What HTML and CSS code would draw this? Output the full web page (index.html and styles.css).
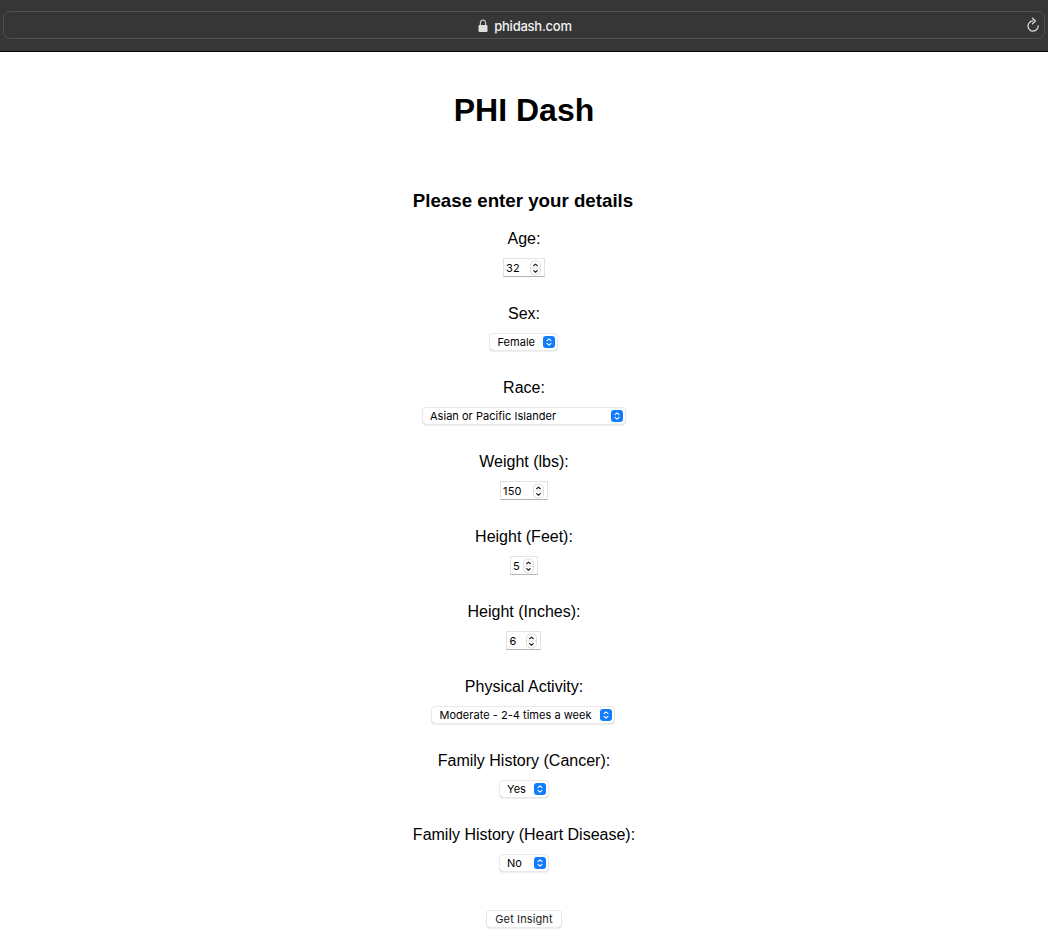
FILE: index.html
```html
<!DOCTYPE html>
<html lang="en">
<head>
<meta charset="utf-8">
<title>PHI Dash</title>
<link rel="stylesheet" href="styles.css">
</head>
<body>
<svg width="0" height="0" class="defs">
  <symbol id="updown" viewBox="0 0 12 12"><rect width="12" height="12" rx="3" fill="#127cff"/><path d="M4 4.6 6 2.8 8 4.6M4 7.4 6 9.2 8 7.4" fill="none" stroke="#fff" stroke-width="1.1" stroke-linecap="round" stroke-linejoin="round"/></symbol>
  <symbol id="stepper" viewBox="0 0 11 16"><rect x=".5" y="1" width="10" height="14" rx="4.2" fill="#fff" stroke="#dcdcdc"/><path d="M1 8H10" stroke="#e0e0e0"/><path d="M3.7 5.7 5.5 4.1 7.3 5.7M3.7 10.6 5.5 12.2 7.3 10.6" fill="none" stroke="#222" stroke-width="1.25" stroke-linecap="round" stroke-linejoin="round"/></symbol>
</svg>
<header class="toolbar">
  <div class="address">
    <svg class="lock" width="10" height="14" viewBox="0 0 10 14"><path d="M2.4 7V4.2a2.6 3 0 0 1 5.2 0V7" fill="none" stroke="#c4c4c4" stroke-width="1.2"/><rect x=".5" y="6" width="9" height="7" rx="1" fill="#dfdfdf"/></svg>
    <span class="host">phidash.com</span>
    <svg class="reload" width="14" height="16" viewBox="0 0 14 16"><path d="M6.8 3.9A5.1 5.1 0 1 0 12.2 9" fill="none" stroke="#d8d8d8" stroke-width="1.3" stroke-linecap="round"/><path d="M6.5 1.2 9.4 4 6.5 6.8" fill="none" stroke="#d8d8d8" stroke-width="1.3" stroke-linecap="round" stroke-linejoin="round"/></svg>
  </div>
</header>
<main class="page">
  <h1 class="title">PHI Dash</h1>
  <h3 class="subtitle">Please enter your details</h3>
  <form class="form">
    <div class="field"><label for="age">Age:</label><div class="number w-age"><input id="age" value="32"><svg><use href="#stepper"/></svg></div></div>
    <div class="field"><label for="sex">Sex:</label><div class="choice w-sex"><select id="sex"><option>Female</option></select><svg><use href="#updown"/></svg></div></div>
    <div class="field"><label for="race">Race:</label><div class="choice w-race"><select id="race"><option>Asian or Pacific Islander</option></select><svg><use href="#updown"/></svg></div></div>
    <div class="field"><label for="weight">Weight (lbs):</label><div class="number w-weight"><input id="weight" value="150"><svg><use href="#stepper"/></svg></div></div>
    <div class="field"><label for="feet">Height (Feet):</label><div class="number w-feet"><input id="feet" value="5"><svg><use href="#stepper"/></svg></div></div>
    <div class="field"><label for="inches">Height (Inches):</label><div class="number w-inches"><input id="inches" value="6"><svg><use href="#stepper"/></svg></div></div>
    <div class="field"><label for="activity">Physical Activity:</label><div class="choice w-activity"><select id="activity"><option>Moderate - 2-4 times a week</option></select><svg><use href="#updown"/></svg></div></div>
    <div class="field"><label for="cancer">Family History (Cancer):</label><div class="choice w-short"><select id="cancer"><option>Yes</option></select><svg><use href="#updown"/></svg></div></div>
    <div class="field"><label for="heart">Family History (Heart Disease):</label><div class="choice w-short"><select id="heart"><option>No</option></select><svg><use href="#updown"/></svg></div></div>
    <button class="submit" type="button">Get Insight</button>
  </form>
</main>
</body>
</html>
```
FILE: styles.css
```css
* { box-sizing: border-box; }
html, body { height: 100%; overflow: hidden; }
body { margin: 0; background: #fff; color: #000; font-family: "Liberation Sans", Arial, sans-serif; }
.defs { position: absolute; }
.toolbar { height: 52px; padding: 11px 3px 0; background: #363636; border-bottom: 1px solid #000; }
.address { position: relative; display: flex; align-items: center; justify-content: center; height: 28px; padding: 1px 0 0 2px; border: 1px solid #505050; border-radius: 7px; }
.lock { margin-right: 6px; }
.host { color: #f2f2f2; font: 500 13px/16px Inter, sans-serif; letter-spacing: -.25px; }
.reload { position: absolute; right: 4px; top: 5px; }
.page { display: flex; flex-direction: column; align-items: center; }
.title { margin: 40px 0 0; font-size: 32px; line-height: 36px; }
.subtitle { margin: 62px 2px 0 0; font-size: 18.72px; line-height: 22px; }
.form { display: flex; flex-direction: column; align-items: center; margin-top: 18px; }
.field { display: flex; flex-direction: column; align-items: center; margin-bottom: 28px; }
.field label { font-size: 16px; line-height: 18px; margin-bottom: 10px; }
.number, .choice { display: flex; align-items: center; background: #fff; }
.number { height: 19px; border: 1px solid #e4e4e4; border-bottom-color: #b4b4b4; padding: 0 3px 0 2px; }
.choice { height: 18px; border-radius: 4.5px; padding: 0 3px 0 8px; }
.choice, .submit { box-shadow: inset 0 0 0 1px #e9e9e9, inset 0 -1px 0 #c0c0c0, 0 1px 1px rgba(0, 0, 0, .07); }
.number svg { width: 11px; height: 16px; flex: none; }
.choice svg { width: 12px; height: 12px; flex: none; }
input, select { appearance: none; flex: 1; min-width: 0; height: 16px; margin: 0; padding: 0; border: 0; outline: 0; background: none; color: #000; font: 11px/16px Inter, sans-serif; letter-spacing: .2px; }
select { letter-spacing: .03px; }
.w-age { width: 42px; }
.w-weight { width: 48px; }
.w-feet { width: 28px; }
.w-inches { width: 35px; }
.w-sex { width: 69px; }
.w-race { width: 204px; }
.w-activity { width: 184px; margin-right: 1px; }
.w-short { width: 50px; }
.submit { width: 76px; height: 18px; margin-top: 10px; padding: 0; border: 0; border-radius: 4.5px; background: #fff; color: #222; font: 11px/16px Inter, sans-serif; letter-spacing: .12px; }
```
